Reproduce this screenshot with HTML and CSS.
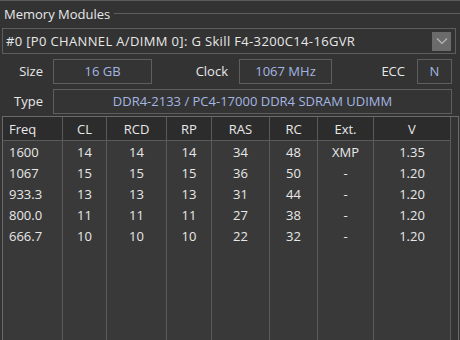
FILE: index.html
```html
<!DOCTYPE html>
<html lang="en">
<head>
    <meta charset="UTF-8">
    <title>Memory Modules</title>
    <link rel="stylesheet" href="styles.css">
</head>
<body>
    <div class="panel">
        <div class="group-title">
            <span>Memory Modules</span>
            <div class="rule"></div>
        </div>

        <div class="combo">
            <span class="combo-text">#0 [P0 CHANNEL A/DIMM 0]: G Skill F4-3200C14-16GVR</span>
            <div class="combo-btn">
                <svg width="12" height="8" viewBox="0 0 12 8"><path d="M1 1.5 L6 6.5 L11 1.5" fill="none" stroke="#b8b8b8" stroke-width="1.2"/></svg>
            </div>
        </div>

        <div class="info-row">
            <span class="label">Size</span>
            <div class="value">16 GB</div>
            <span class="label">Clock</span>
            <div class="value">1067 MHz</div>
            <span class="label">ECC</span>
            <div class="value">N</div>
        </div>

        <div class="info-row type-row">
            <span class="label">Type</span>
            <div class="value">DDR4-2133 / PC4-17000 DDR4 SDRAM UDIMM</div>
        </div>

        <div class="table-wrap">
            <table class="timings">
                <thead>
                    <tr>
                        <th class="freq">Freq</th><th>CL</th><th>RCD</th><th>RP</th><th>RAS</th><th>RC</th><th>Ext.</th><th>V</th>
                    </tr>
                </thead>
                <tbody>
                    <tr><td class="freq">1600</td><td>14</td><td>14</td><td>14</td><td>34</td><td>48</td><td>XMP</td><td>1.35</td></tr>
                    <tr><td class="freq">1067</td><td>15</td><td>15</td><td>15</td><td>36</td><td>50</td><td>-</td><td>1.20</td></tr>
                    <tr><td class="freq">933.3</td><td>13</td><td>13</td><td>13</td><td>31</td><td>44</td><td>-</td><td>1.20</td></tr>
                    <tr><td class="freq">800.0</td><td>11</td><td>11</td><td>11</td><td>27</td><td>38</td><td>-</td><td>1.20</td></tr>
                    <tr><td class="freq">666.7</td><td>10</td><td>10</td><td>10</td><td>22</td><td>32</td><td>-</td><td>1.20</td></tr>
                    <tr class="filler"><td></td><td></td><td></td><td></td><td></td><td></td><td></td><td></td></tr>
                </tbody>
            </table>
        </div>
    </div>
</body>
</html>
```

FILE: styles.css
```css
html, body {
    margin: 0;
    height: 100%;
    overflow: hidden;
}
body {
    font-family: "Open Sans", "Noto Sans", sans-serif;
    font-size: 13px;
    background-color: #333333;
    color: #e8e8e8;
}
.panel {
    height: 340px;
    box-sizing: border-box;
    border-top: 1px solid #5a5a5a;
    padding: 2px 6px 0 2px;
    display: flex;
    flex-direction: column;
}
.group-title {
    display: flex;
    align-items: center;
    height: 21px;
    padding-left: 2px;
}
.group-title .rule {
    flex: 1;
    height: 1px;
    background: #5e5e5e;
    margin-left: 4px;
    margin-right: -6px;
}
.combo {
    margin-top: 4px;
    height: 24px;
    border: 1px solid #5e5e5e;
    display: flex;
    align-items: center;
    justify-content: space-between;
    padding: 0 4px 0 3px;
    margin-right: -2px;
}
.combo-text {
    letter-spacing: 0.35px;
}
.combo-btn {
    width: 19px;
    height: 19px;
    background: #6b6b6b;
    display: flex;
    align-items: center;
    justify-content: center;
}
.info-row {
    display: grid;
    grid-template-columns: 51px 99px 87px 93px 85px 35px;
    height: 25px;
    margin-top: 5px;
}
.type-row {
    grid-template-columns: 51px 399px;
}
.label {
    text-align: right;
    padding-right: 10px;
    line-height: 25px;
}
.info-row .label:nth-child(3) { padding-right: 11px; }
.info-row .label:nth-child(5) { padding-right: 12px; }
.value {
    border: 1px solid #5e5e5e;
    box-sizing: border-box;
    text-align: center;
    line-height: 23px;
    color: #a4b6e2;
    background: #343434;
}
.table-wrap {
    flex: 1;
    margin-top: 2px;
    border: 1px solid #6a6a6a;
    border-bottom: none;
    padding-right: 2px;
    margin-right: -5px;
    display: flex;
}
.timings {
    border-collapse: collapse;
    width: 448px;
    height: 100%;
    background: #393939;
}
.timings th,
.timings td {
    border-left: 1px solid #5a5a5a;
    text-align: center;
    padding: 0;
    font-weight: normal;
}
.timings th:first-child,
.timings td:first-child {
    border-left: none;
}
.timings th:last-child,
.timings td:last-child {
    border-right: 1px solid #5a5a5a;
}
.timings th {
    height: 23px;
    background: #2c2c2c;
    border-bottom: 1px solid #5a5a5a;
}
.timings td {
    height: 21px;
}
.timings .freq {
    text-align: left;
    padding-left: 6px;
}
.timings th:nth-child(1) { width: 53px; }
.timings th:nth-child(2) { width: 43px; }
.timings th:nth-child(3) { width: 59px; }
.timings th:nth-child(4) { width: 44px; }
.timings th:nth-child(5) { width: 57px; }
.timings th:nth-child(6) { width: 47px; }
.timings th:nth-child(7) { width: 55px; }
.timings .filler td {
    height: auto;
}
```
